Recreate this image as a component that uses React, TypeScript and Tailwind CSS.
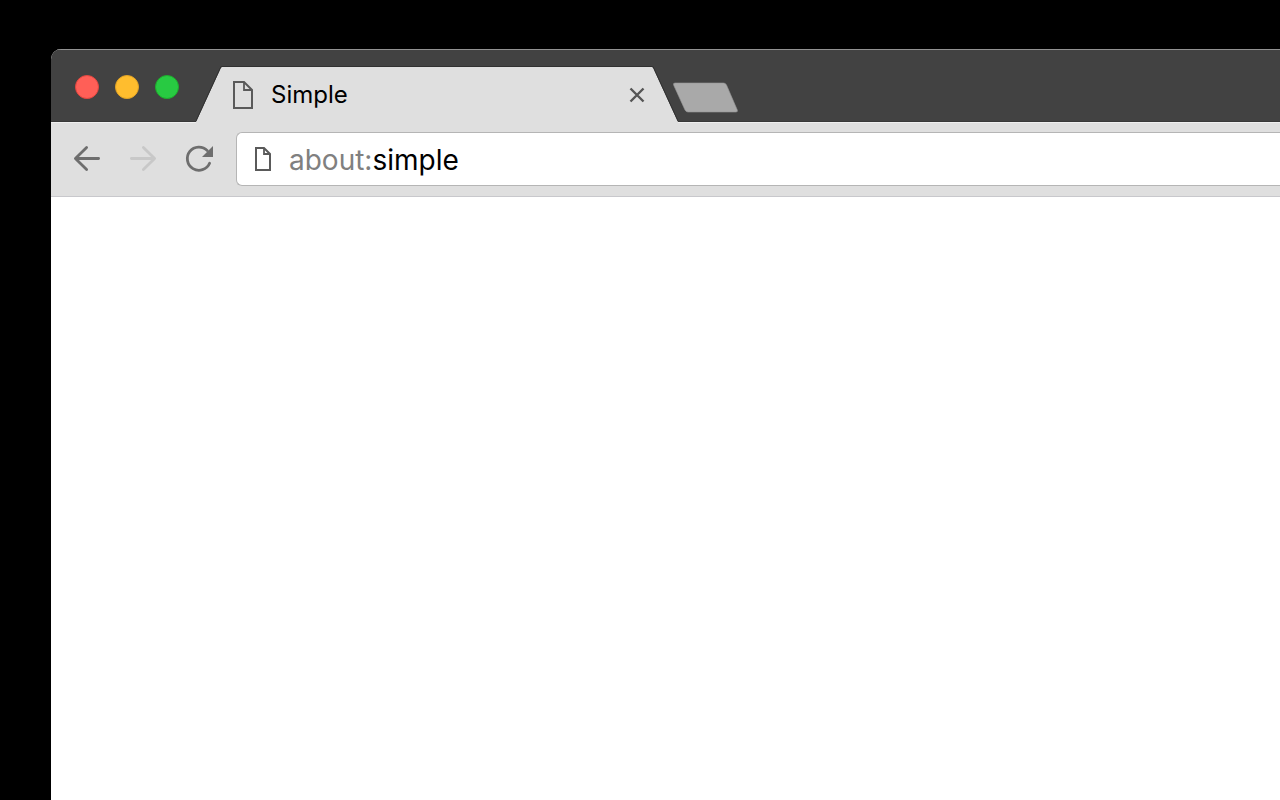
import React from "react";

function PageIcon({ className, width, height }: { className: string; width: number; height: number }) {
  const right = width - 1;
  const fold = Math.round(width / 2) + 1;
  const foldDepth = width > 18 ? 9 : 7;
  return (
    <svg className={className} width={width} height={height} viewBox={`0 0 ${width} ${height}`} fill="none" stroke="currentColor" strokeWidth="2" aria-hidden="true">
      <path d={`M1 1H${fold}L${right} ${foldDepth}V${height - 1}H1Z`} />
      <path d={`M${fold} 1V${foldDepth}H${right}`} strokeWidth="1.8" />
    </svg>
  );
}

function WindowControls() {
  return (
    <div className="flex shrink-0 items-center gap-4">
      <button type="button" aria-label="Close window" className="size-6 rounded-full border border-[#e2463f] bg-[#ff5f57]" />
      <button type="button" aria-label="Minimise window" className="size-6 rounded-full border border-[#e1a325] bg-[#ffbd2e]" />
      <button type="button" aria-label="Zoom window" className="size-6 rounded-full border border-[#1dad2b] bg-[#28ca42]" />
    </div>
  );
}

function Tab() {
  return (
    <div className="relative -mb-px flex h-[57px] w-[482px] shrink-0 self-end">
      <svg className="shrink-0" width="26" height="57" viewBox="0 0 26 57" aria-hidden="true">
        <path d="M0 57V56L24.800 2Q25.300 1 26 1V57Z" fill="#dfdfdf" />
        <path d="M0 55L24.300 2Q24.800 .5 26 .5" fill="none" stroke="#303030" />
      </svg>
      <div className="flex min-w-0 flex-1 items-center border-t border-[#303030] bg-[#dfdfdf] pb-px pl-[11px] pr-[7px]">
        <PageIcon className="shrink-0 text-[#5a5a5a]" width={20} height={28} />
        <h1 className="ml-[18px] flex-1 truncate text-2xl text-black">Simple</h1>
        <button type="button" aria-label="Close tab" className="shrink-0 text-[#555555]">
          <svg width="16" height="16" viewBox="0 0 16 16" fill="none" stroke="currentColor" strokeWidth="2.4" aria-hidden="true">
            <path d="M1.500 1.500L14.500 14.500M14.500 1.500L1.500 14.500" />
          </svg>
        </button>
      </div>
      <svg className="shrink-0" width="26" height="57" viewBox="0 0 26 57" aria-hidden="true">
        <path d="M26 57V56L1.200 2Q.7 1 0 1V57Z" fill="#dfdfdf" />
        <path d="M26 55L1.700 2Q1.200 .5 0 .5" fill="none" stroke="#303030" />
      </svg>
    </div>
  );
}

function Arrow({ flipped = false }: { flipped?: boolean }) {
  return (
    <svg width="28" height="28" viewBox="0 0 28 28" fill="none" stroke="currentColor" strokeWidth="2.800" strokeLinecap="round" strokeLinejoin="round" aria-hidden="true">
      <path d={flipped ? "M2.400 13.500H25M14.400 2.500L25.600 13.500L14.400 24.500" : "M25.600 13.500H3M13.600 2.500L2.400 13.500L13.600 24.500"} />
    </svg>
  );
}

function Toolbar() {
  return (
    <div className="flex items-center border-b border-[#c8c8cc] bg-[#dfdfdf] pb-2.5 pl-[22px] pt-[9px]">
      <div className="flex shrink-0 items-center gap-7">
        <button type="button" aria-label="Back" className="text-[#6e6e6e]">
          <Arrow />
        </button>
        <button type="button" aria-label="Forward" disabled className="text-[#c8c8c8]">
          <Arrow flipped />
        </button>
        <button type="button" aria-label="Reload" className="text-[#6e6e6e]">
          <svg width="30" height="28" viewBox="0 0 30 28" fill="none" aria-hidden="true">
            <path d="M24.600 18.200A11.600 11.600 0 1 1 22.300 5.600" stroke="currentColor" strokeWidth="2.800" strokeLinecap="round" />
            <path d="M28 1V12H17Z" fill="currentColor" />
          </svg>
        </button>
      </div>
      <label className="ml-[21px] flex h-[54px] min-w-0 flex-1 items-center rounded-l-md border border-r-0 border-[#b5b5b5] bg-white pl-[18px] text-[28px]">
        <PageIcon className="shrink-0 text-[#5a5a5a]" width={16} height={24} />
        <span className="ml-[18px] pt-0.5 text-[#808080]">about:</span>
        <input type="text" aria-label="Address" defaultValue="simple" className="min-w-0 flex-1 bg-transparent pt-0.5 text-black outline-none" />
      </label>
    </div>
  );
}

export default function App() {
  return (
    <div className="flex min-h-screen flex-col overflow-hidden bg-black pl-[51px] pt-[49px] font-['Inter','Liberation_Sans',sans-serif]">
      <div className="flex flex-1 flex-col overflow-hidden rounded-tl-[10px] bg-white">
        <header className="flex h-[74px] items-center border-b border-t border-b-[#efefef] border-t-[#929292] bg-[#424242] pl-6 pt-0.5 shadow-[inset_0_-1px_0_#383838]">
          <WindowControls />
          <div className="ml-[17px] flex self-stretch">
            <Tab />
            <button type="button" aria-label="New tab" className="-ml-[5px] mb-[9px] self-end">
              <svg width="65" height="31" viewBox="0 0 65 31" aria-hidden="true">
                <path d="M2 1H50.500Q52.500 1 53.500 3L64.300 28Q65 30 63 30H15Q13 30 12 28L.6 3Q0 1 2 1Z" fill="#a9a9a9" stroke="#999999" strokeWidth=".6" />
              </svg>
            </button>
          </div>
        </header>
        <Toolbar />
        <main className="flex-1 bg-white" />
      </div>
    </div>
  );
}
